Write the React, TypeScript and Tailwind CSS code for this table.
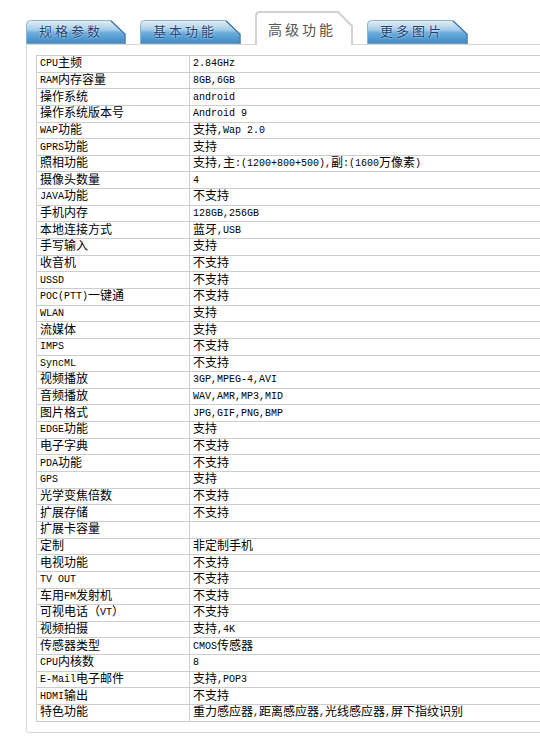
import type { ReactNode } from "react";

type SpecRow = [string, string];

const SPECS: SpecRow[] = [
    ["CPU主频", "2.84GHz"],
    ["RAM内存容量", "8GB,6GB"],
    ["操作系统", "android"],
    ["操作系统版本号", "Android 9"],
    ["WAP功能", "支持,Wap 2.0"],
    ["GPRS功能", "支持"],
    ["照相功能", "支持,主:(1200+800+500),副:(1600万像素)"],
    ["摄像头数量", "4"],
    ["JAVA功能", "不支持"],
    ["手机内存", "128GB,256GB"],
    ["本地连接方式", "蓝牙,USB"],
    ["手写输入", "支持"],
    ["收音机", "不支持"],
    ["USSD", "不支持"],
    ["POC(PTT)一键通", "不支持"],
    ["WLAN", "支持"],
    ["流媒体", "支持"],
    ["IMPS", "不支持"],
    ["SyncML", "不支持"],
    ["视频播放", "3GP,MPEG-4,AVI"],
    ["音频播放", "WAV,AMR,MP3,MID"],
    ["图片格式", "JPG,GIF,PNG,BMP"],
    ["EDGE功能", "支持"],
    ["电子字典", "不支持"],
    ["PDA功能", "不支持"],
    ["GPS", "支持"],
    ["光学变焦倍数", "不支持"],
    ["扩展存储", "不支持"],
    ["扩展卡容量", ""],
    ["定制", "非定制手机"],
    ["电视功能", "不支持"],
    ["TV OUT", "不支持"],
    ["车用FM发射机", "不支持"],
    ["可视电话（VT）", "不支持"],
    ["视频拍摄", "支持,4K"],
    ["传感器类型", "CMOS传感器"],
    ["CPU内核数", "8"],
    ["E-Mail电子邮件", "支持,POP3"],
    ["HDMI输出", "不支持"],
    ["特色功能", "重力感应器,距离感应器,光线感应器,屏下指纹识别"],
];

// latin runs are drawn narrower, like the half-width glyphs of the original
function Mixed({ text }: { text: string }) {
    const parts = text.split(/([\x00-\x7F]+)/).filter(Boolean);
    const out: ReactNode[] = parts.map((part, i) =>
        /^[\x00-\x7F]+$/.test(part) ? (
            <span key={i} className="font-['Liberation_Mono',monospace] text-[10px]">
                {part}
            </span>
        ) : (
            <span key={i}>{part}</span>
        )
    );
    return <>{out}</>;
}

type BlueTabProps = {
    label: string;
    width: number;
    className: string;
};

function BlueTab({ label, width, className }: BlueTabProps) {
    const w = width;
    return (
        <div className={`relative mb-px flex h-[24px] items-center pl-[13px] ${className}`}>
            <svg className="absolute inset-0" width={w} height={24} viewBox={`0 0 ${w} 24`}>
                <defs>
                    <linearGradient id="tab-blue" x1="0" y1="0" x2="0" y2="1">
                        <stop offset="0" stopColor="#e6eff5" />
                        <stop offset="0.14" stopColor="#cfe3f0" />
                        <stop offset="0.4" stopColor="#a3cce8" />
                        <stop offset="0.52" stopColor="#6eaddb" />
                        <stop offset="0.8" stopColor="#4e97cf" />
                        <stop offset="1" stopColor="#4289c3" />
                    </linearGradient>
                </defs>
                <path
                    d={`M0.5,24 L0.5,4.5 Q0.5,0.5 4.5,0.5 L${w - 15},0.5 L${w - 1},14 L${w - 1},24 Z`}
                    fill="url(#tab-blue)"
                    stroke="#8fb2cc"
                    strokeWidth="1"
                />
                <path d={`M${w - 15},1 L${w - 1},14 L${w - 1},24`} fill="none" stroke="#3f74a3" strokeWidth="1.2" />
            </svg>
            <span className="relative text-[13px] tracking-[3px] text-[#1d3f75] [text-shadow:0_0_2px_#ffffff]">
                {label}
            </span>
        </div>
    );
}

function ActiveTab({ label }: { label: string }) {
    return (
        <div className="relative flex h-[34px] w-[98px] items-center pl-[13px] pt-[4px]">
            <svg className="absolute inset-0" width={98} height={34} viewBox="0 0 98 34">
                <path d="M1,34 L1,5 Q1,1 5,1 L83,1 L97,15 L97,34" fill="#ffffff" stroke="#d2d2d2" strokeWidth="2" />
            </svg>
            <span className="relative text-[14px] tracking-[3px] text-[#555555]">{label}</span>
        </div>
    );
}

export default function App() {
    return (
        <div className="h-[745px] w-[540px] overflow-hidden bg-white pl-[26px] pt-[11px] font-['Liberation_Sans','Noto_Sans_CJK_SC',sans-serif] text-black">
            <div className="relative z-10 flex h-[34px] items-end gap-[14px]">
                <BlueTab label="规格参数" width={100} className="w-[100px]" />
                <BlueTab label="基本功能" width={101} className="w-[101px]" />
                <ActiveTab label="高级功能" />
                <BlueTab label="更多图片" width={101} className="w-[101px]" />
            </div>

            <section className="-mt-px w-[620px] rounded-bl-[3px] border border-[#d5d5d5] px-[9px] pb-[10px] pt-[10px]">
                <div className="border-l border-t border-[#cdcdcd]">
                    {SPECS.map(([label, value]) => (
                        <div
                            key={label}
                            className="flex h-[16.65px] items-center border-b border-[#cdcdcd] text-[12px] leading-[15px]"
                        >
                            <div className="flex h-full w-[153px] shrink-0 items-center border-r border-[#cdcdcd] pl-[3px]">
                                <Mixed text={label} />
                            </div>
                            <div className="flex h-full items-center pl-[3px] whitespace-nowrap">
                                <Mixed text={value} />
                            </div>
                        </div>
                    ))}
                </div>
            </section>
        </div>
    );
}
